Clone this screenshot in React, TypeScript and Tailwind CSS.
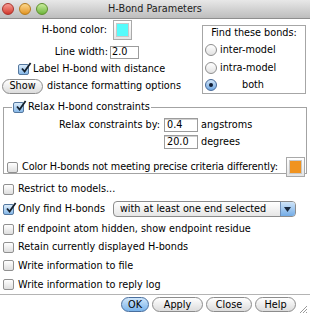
import React from 'react'

function Check({ checked }: { checked?: boolean }) {
  return (
    <span
      className={`relative inline-flex w-[11px] h-[11px] shrink-0 rounded-[2px] border ${
        checked
          ? 'border-[#55789f] bg-linear-to-b from-[#dcecfa] to-[#86b8e8]'
          : 'border-[#909090] bg-linear-to-b from-[#ffffff] to-[#dedede]'
      }`}
    >
      {checked && (
        <svg className="absolute -top-[3px] left-[1px]" width="12" height="12" viewBox="0 0 12 12">
          <path d="M2 6.5 L4.6 9.6 L10.6 1" stroke="#15202c" strokeWidth="1.8" fill="none" />
        </svg>
      )}
    </span>
  )
}

function Radio({ on }: { on?: boolean }) {
  return (
    <span
      className={`inline-flex items-center justify-center w-[12px] h-[12px] shrink-0 rounded-full border ${
        on
          ? 'border-[#46699a] bg-linear-to-b from-[#d3e6f8] to-[#6fa6e0]'
          : 'border-[#8e8e8e] bg-linear-to-b from-[#ffffff] to-[#e2e2e2]'
      }`}
    >
      {on && <span className="w-[4px] h-[4px] rounded-full bg-[#0f1c33]" />}
    </span>
  )
}

function Btn({ children, w, primary }: { children: React.ReactNode; w: string; primary?: boolean }) {
  return (
    <span
      className={`inline-flex items-center justify-center h-[15px] rounded-full border ${w} ${
        primary
          ? 'border-[#4a6f9e] bg-linear-to-b from-[#cfe6fb] to-[#79b3ea]'
          : 'border-[#8c8c8c] bg-linear-to-b from-[#ffffff] to-[#dcdcdc]'
      }`}
    >
      {children}
    </span>
  )
}

function Field({ value, w }: { value: string; w: string }) {
  return (
    <span className={`inline-flex items-center h-[14px] px-[2px] border border-[#9c9c9c] bg-white shadow-[inset_0_1px_0_#d0d0d0] ${w}`}>
      {value}
    </span>
  )
}

function Swatch({ color }: { color: string }) {
  return (
    <span className="inline-flex w-[19px] h-[20px] p-[2px] border border-[#a9a9a9] bg-linear-to-b from-[#ffffff] to-[#e4e4e4]">
      <span className={`flex-1 border border-[#c8c8c8] ${color}`} />
    </span>
  )
}

function Row({ checked, children, h }: { checked?: boolean; children: React.ReactNode; h: string }) {
  return (
    <div className={`flex items-center pl-[3px] gap-[4px] ${h}`}>
      <Check checked={checked} />
      {children}
    </div>
  )
}

export default function App() {
  return (
    <div className="relative w-[310px] h-[317px] bg-white text-[9.7px] leading-[12px] text-black whitespace-nowrap font-['DejaVu_Sans',sans-serif] overflow-hidden">
      {/* title bar */}
      <div className="relative flex items-center h-[19px] border-b border-[#8e8e8e] bg-linear-to-b from-[#e8e8e8] to-[#bdbdbd]">
        <div className="flex gap-[5px] pl-[2px]">
          <span className="w-[12px] h-[12px] rounded-full border border-[#a8322b] bg-linear-to-b from-[#f79a93] to-[#d1352b]" />
          <span className="w-[12px] h-[12px] rounded-full border border-[#b57a1d] bg-linear-to-b from-[#fcd88a] to-[#e2951c]" />
          <span className="w-[12px] h-[12px] rounded-full border border-[#5d8e2c] bg-linear-to-b from-[#c9ec9b] to-[#6db53a]" />
        </div>
        <span className="absolute left-0 right-0 text-center text-[#222]">H-Bond Parameters</span>
      </div>

      {/* top section */}
      <div className="flex items-start">
        <div className="w-[200px]">
          <div className="flex items-center h-[20px] mt-[1px]">
            <span className="w-[107px] text-right">H-bond color:</span>
            <span className="ml-[6px]">
              <Swatch color="bg-[#55fbfb]" />
            </span>
          </div>
          <div className="flex items-center h-[12px] mt-[6px]">
            <span className="w-[108px] text-right">Line width:</span>
            <span className="ml-[2px] inline-flex items-center w-[29px] h-[13px] px-[1px] border border-[#9c9c9c]">2.0</span>
          </div>
          <div className="flex items-center gap-[4px] h-[12px] mt-[5px] pl-[18px]">
            <Check checked />
            <span>Label H-bond with distance</span>
          </div>
          <div className="flex items-center h-[14px] mt-[4px] pl-[2px]">
            <Btn w="w-[41px]">Show</Btn>
            <span className="ml-[4px]">distance formatting options</span>
          </div>
        </div>
        <div className="ml-[2px] mt-[6px] w-[104px] h-[69px] border border-[#a6a6a6]">
          <div className="h-[12px] mt-[1px] text-center">Find these bonds:</div>
          <div className="flex items-center gap-[3px] pl-[2px] mt-[4px] h-[13px]">
            <Radio />
            <span>inter-model</span>
          </div>
          <div className="flex items-center gap-[3px] pl-[2px] mt-[5px] h-[13px]">
            <Radio />
            <span>intra-model</span>
          </div>
          <div className="flex items-center pl-[2px] mt-[4px] h-[13px]">
            <Radio on />
            <span className="ml-[25px]">both</span>
          </div>
        </div>
      </div>

      {/* relax constraints group */}
      <fieldset className="mx-[3px] mt-[7px] border border-[#a3a3a3]">
        <legend className="ml-[8px] px-[1px] flex items-center gap-[4px] h-[12px]">
          <Check checked />
          <span>Relax H-bond constraints</span>
        </legend>
        <div className="flex mt-[5px]">
          <div className="w-[156px] h-[14px] flex items-center justify-end">Relax constraints by:</div>
          <div className="ml-[4px] flex flex-col gap-[3px]">
            <div className="flex items-center gap-[3px]">
              <Field value="0.4" w="w-[34px]" />
              <span>angstroms</span>
            </div>
            <div className="flex items-center gap-[3px]">
              <Field value="20.0" w="w-[34px]" />
              <span>degrees</span>
            </div>
          </div>
        </div>
        <div className="flex items-center h-[20px] mt-[8px] -mb-[4px] pl-[3px] pr-[1px]">
          <Check />
          <span className="ml-[4px] tracking-[-0.1px]">Color H-bonds not meeting precise criteria differently:</span>
          <span className="ml-auto">
            <Swatch color="bg-[#f0931f]" />
          </span>
        </div>
      </fieldset>

      {/* options */}
      <div className="mt-[6px]">
        <Row h="h-[18px]">
          <span>Restrict to models...</span>
        </Row>
        <Row checked h="h-[22px]">
          <span>Only find H-bonds</span>
          <span className="ml-[4px] flex items-center w-[183px] h-[16px] rounded-[4px] border border-[#8c8c8c] bg-linear-to-b from-[#ffffff] to-[#e6e6e6] overflow-hidden">
            <span className="flex-1 pl-[6px]">with at least one end selected</span>
            <span className="flex items-center justify-center w-[15px] h-full border-l border-[#6f8fb8] bg-linear-to-b from-[#cfe4f8] to-[#73ace6]">
              <svg width="7" height="5" viewBox="0 0 7 5">
                <path d="M0 0 H7 L3.5 5 Z" fill="#1a2a40" />
              </svg>
            </span>
          </span>
        </Row>
        <Row h="h-[18px]">
          <span>If endpoint atom hidden, show endpoint residue</span>
        </Row>
        <Row h="h-[18px]">
          <span>Retain currently displayed H-bonds</span>
        </Row>
        <Row h="h-[19px]">
          <span>Write information to file</span>
        </Row>
        <Row h="h-[19px]">
          <span>Write information to reply log</span>
        </Row>
      </div>

      {/* buttons */}
      <div className="border-t border-[#b4b4b4] flex justify-end gap-[3px] pr-[14px] pt-[2px]">
        <Btn w="w-[28px]" primary>OK</Btn>
        <Btn w="w-[51px]">Apply</Btn>
        <Btn w="w-[46px]">Close</Btn>
        <Btn w="w-[41px]">Help</Btn>
      </div>
      <svg className="absolute right-[2px] bottom-[3px]" width="10" height="10" viewBox="0 0 10 10">
        <path d="M2 9 L9 2 M5 9 L9 5 M8 9 L9 8" stroke="#9a9a9a" strokeWidth="1" />
      </svg>
    </div>
  )
}
